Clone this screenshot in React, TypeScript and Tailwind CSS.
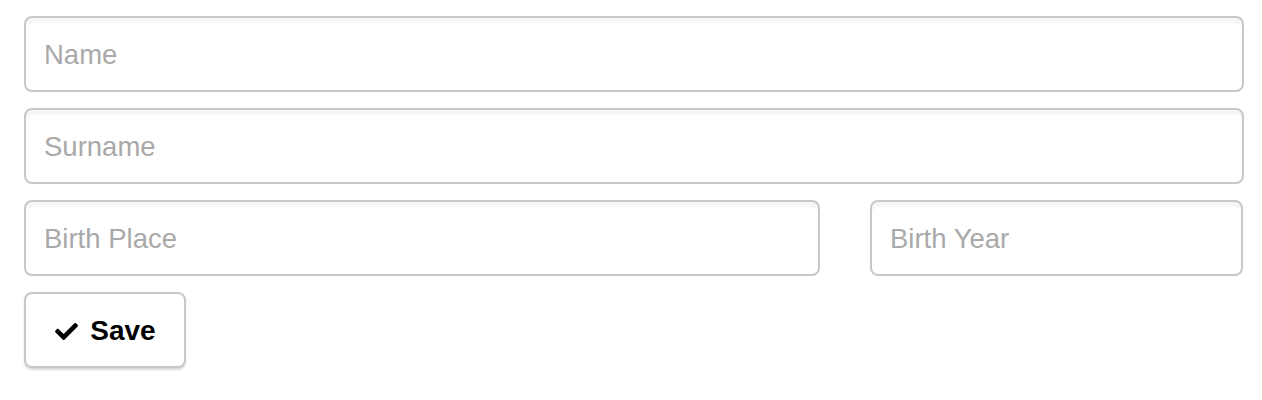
import { FaCheck } from 'react-icons/fa';

const inputClass =
  "h-[76px] w-full rounded-[8px] border-2 border-[#c8c8c8] bg-white px-[18px] pt-[2px] text-[27.5px] text-[#333] placeholder:text-[#a9a9a9] shadow-[inset_0_5px_0_#f6f6f6] outline-none";

export default function App() {
  return (
    <div
      className="min-h-[400px] bg-white px-[24px] pt-[16px]"
      style={{ fontFamily: '"Liberation Sans", Arial, sans-serif' }}
    >
      <form className="flex w-[1220px] flex-col gap-[16px]" onSubmit={(e) => e.preventDefault()}>
        <input className={inputClass} placeholder="Name" />
        <input className={inputClass} placeholder="Surname" />
        <div className="flex gap-[50px]">
          <div className="w-[796px]">
            <input className={inputClass} placeholder="Birth Place" />
          </div>
          <div className="w-[373px]">
            <input className={inputClass} placeholder="Birth Year" />
          </div>
        </div>
        <div>
          <button
            type="submit"
            className="flex h-[76px] w-[162px] items-center justify-center gap-[11px] rounded-[8px] border-2 border-[#c8c8c8] bg-white pt-[2px] text-[28px] font-bold text-black shadow-[0_2px_2px_rgba(0,0,0,0.15)]"
          >
            <FaCheck className="h-[23px] w-[25px]" />
            Save
          </button>
        </div>
      </form>
    </div>
  );
}
